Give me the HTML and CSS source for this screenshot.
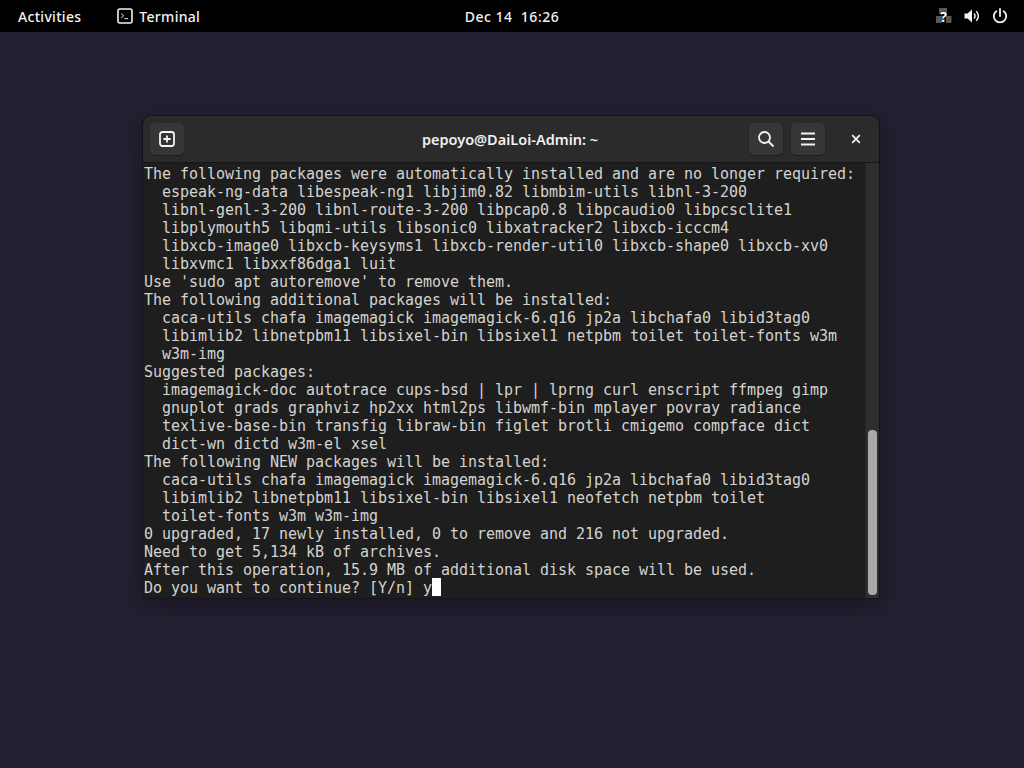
FILE: index.html
```html
<!DOCTYPE html>
<html lang="en">
<head>
<meta charset="utf-8">
<title>Terminal</title>
<link rel="stylesheet" href="styles.css">
</head>
<body>
<header class="topbar">
  <div class="tb-left">
    <span class="tb-label">Activities</span>
    <span class="tb-app">
      <svg class="tb-app-icon" width="16" height="16" viewBox="0 0 16 16"><rect x="1" y="1" width="14" height="14" rx="2" fill="none" stroke="#f2f2f2" stroke-width="1.6"/><path d="M4.2 5.6 6.6 7.8 4.2 10" fill="none" stroke="#f2f2f2" stroke-width="1"/><path d="M7.4 10.6h3.6" stroke="#f2f2f2" stroke-width="1"/></svg>
      <span class="tb-label">Terminal</span>
    </span>
  </div>
  <div class="tb-clock">Dec 14&nbsp; 16:26</div>
  <div class="tb-right">
    <svg width="18" height="18" viewBox="0 0 18 18"><g fill="#585858"><rect x="5" y="1" width="8" height="6"/><rect x="2" y="9" width="6" height="7"/><rect x="12" y="9" width="5.500" height="7"/></g><text x="9.500" y="15" class="tb-q">?</text></svg>
    <svg width="18" height="18" viewBox="0 0 18 18"><path d="M1.500 6.500h3L9 2.500v13l-4.500-4h-3z" fill="#f2f2f2"/><path d="M11 6.500a3.500 3.500 0 0 1 0 5" fill="none" stroke="#f2f2f2" stroke-width="1.500"/><path d="M13.300 4.300a6.500 6.500 0 0 1 0 9.400" fill="none" stroke="#f2f2f2" stroke-width="1.500"/></svg>
    <svg width="16" height="16" viewBox="0 0 16 16"><path d="M4.400 3.200a6.200 6.200 0 1 0 7.200 0" fill="none" stroke="#f2f2f2" stroke-width="1.800" stroke-linecap="round"/><path d="M8 1v7" stroke="#f2f2f2" stroke-width="1.800" stroke-linecap="round"/></svg>
  </div>
</header>

<section class="window">
  <div class="titlebar">
    <div class="hb-start">
      <button class="hb-btn"><svg width="16" height="16" viewBox="0 0 16 16"><rect x="1" y="1" width="14" height="14" rx="2.500" fill="none" stroke="#f4f4f4" stroke-width="1.800"/><path d="M8 4.400v7.200M4.400 8h7.200" stroke="#f4f4f4" stroke-width="1.800"/></svg></button>
    </div>
    <div class="title">pepoyo@DaiLoi-Admin: ~</div>
    <div class="hb-end">
      <button class="hb-btn"><svg width="18" height="18" viewBox="0 0 18 18"><circle cx="7.500" cy="7.500" r="5.500" fill="none" stroke="#f4f4f4" stroke-width="1.800"/><path d="M11.500 11.500 16.500 16.500" stroke="#f4f4f4" stroke-width="1.800"/></svg></button>
      <button class="hb-btn"><svg width="16" height="14" viewBox="0 0 16 14"><path d="M1 1.500h14M1 7h14M1 12.500h14" stroke="#f4f4f4" stroke-width="1.800"/></svg></button>
      <button class="hb-close"><svg width="10" height="10" viewBox="0 0 10 10"><path d="M1.200 1.200 8.800 8.800M8.800 1.200 1.200 8.800" stroke="#f4f4f4" stroke-width="1.800"/></svg></button>
    </div>
  </div>
  <div class="term-area">
<pre class="term">The following packages were automatically installed and are no longer required:
  espeak-ng-data libespeak-ng1 libjim0.82 libmbim-utils libnl-3-200
  libnl-genl-3-200 libnl-route-3-200 libpcap0.8 libpcaudio0 libpcsclite1
  libplymouth5 libqmi-utils libsonic0 libxatracker2 libxcb-icccm4
  libxcb-image0 libxcb-keysyms1 libxcb-render-util0 libxcb-shape0 libxcb-xv0
  libxvmc1 libxxf86dga1 luit
Use 'sudo apt autoremove' to remove them.
The following additional packages will be installed:
  caca-utils chafa imagemagick imagemagick-6.q16 jp2a libchafa0 libid3tag0
  libimlib2 libnetpbm11 libsixel-bin libsixel1 netpbm toilet toilet-fonts w3m
  w3m-img
Suggested packages:
  imagemagick-doc autotrace cups-bsd | lpr | lprng curl enscript ffmpeg gimp
  gnuplot grads graphviz hp2xx html2ps libwmf-bin mplayer povray radiance
  texlive-base-bin transfig libraw-bin figlet brotli cmigemo compface dict
  dict-wn dictd w3m-el xsel
The following NEW packages will be installed:
  caca-utils chafa imagemagick imagemagick-6.q16 jp2a libchafa0 libid3tag0
  libimlib2 libnetpbm11 libsixel-bin libsixel1 neofetch netpbm toilet
  toilet-fonts w3m w3m-img
0 upgraded, 17 newly installed, 0 to remove and 216 not upgraded.
Need to get 5,134 kB of archives.
After this operation, 15.9 MB of additional disk space will be used.
Do you want to continue? [Y/n] y<span class="cursor"> </span></pre>
    <div class="scrollbar"><div class="thumb"></div></div>
  </div>
</section>
</body>
</html>
```
FILE: styles.css
```css
* { box-sizing: border-box; }
html, body { margin: 0; height: 100%; }
body {
  background: #241f31;
  overflow: hidden;
  position: relative;
  font-family: "Noto Sans", sans-serif;
}
.topbar {
  height: 32px;
  background: #000;
  color: #f2f2f2;
  display: grid;
  grid-template-columns: 1fr auto 1fr;
  align-items: center;
  padding: 0 16px 0 18px;
  font-size: 14px;
  font-weight: 500;
}
.tb-left { display: flex; align-items: center; gap: 36px; }
.tb-app { display: flex; align-items: center; gap: 6px; }
.tb-label { letter-spacing: 0.3px; }
.tb-clock { letter-spacing: 0.5px; padding-right: 2px; }
.tb-right { display: flex; align-items: center; justify-content: flex-end; gap: 11px; }
.tb-q { font: bold 14px "Noto Sans", sans-serif; fill: #fff; stroke: #000; stroke-width: 0.6px; paint-order: stroke; text-anchor: middle; }
.window {
  position: absolute;
  left: 143px;
  top: 116px;
  width: 736px;
  height: 482px;
  border-radius: 8px 8px 0 0;
  background: #1e1e1e;
  outline: 1px solid #14121a;
  box-shadow: 0 6px 22px rgba(0,0,0,.3);
  display: flex;
  flex-direction: column;
  overflow: hidden;
}
.titlebar {
  height: 47px;
  flex: none;
  background: #2b2b2b;
  border-bottom: 1px solid #161616;
  display: grid;
  grid-template-columns: 1fr auto 1fr;
  align-items: center;
  padding: 0 6px 0 7px;
  color: #f0f0f0;
}
.hb-start { display: flex; }
.hb-end { display: flex; justify-content: flex-end; align-items: center; gap: 8px; }
.title {
  font-size: 14.5px;
  font-weight: 600;
  padding-right: 3px;
}
.hb-btn {
  width: 34px;
  height: 32px;
  border: 0;
  border-radius: 5px;
  background: #363636;
  box-shadow: 0 1px 1px #1c1c1c;
  padding: 0;
  display: flex;
  align-items: center;
  justify-content: center;
}
.hb-close {
  width: 34px;
  height: 32px;
  margin-left: 6px;
  border: 0;
  background: none;
  padding: 0;
  display: flex;
  align-items: center;
  justify-content: center;
}
.term-area {
  flex: 1;
  min-height: 0;
  display: flex;
  background: #1e1e1e;
}
.term {
  flex: 1;
  margin: 0;
  padding: 2px 0 0 1px;
  font-family: "DejaVu Sans Mono", monospace;
  font-size: 15px;
  letter-spacing: -0.03px;
  line-height: 18px;
  color: #d4d3d0;
}
.cursor { background: #fff; position: relative; top: -1px; }
.scrollbar {
  width: 14px;
  background: #2e2e2e;
  border-left: 1px solid #262626;
  position: relative;
}
.thumb {
  position: absolute;
  left: 2px;
  right: 2px;
  top: 267px;
  bottom: 3px;
  background: #a9a9a9;
  border-radius: 4px;
}
```
